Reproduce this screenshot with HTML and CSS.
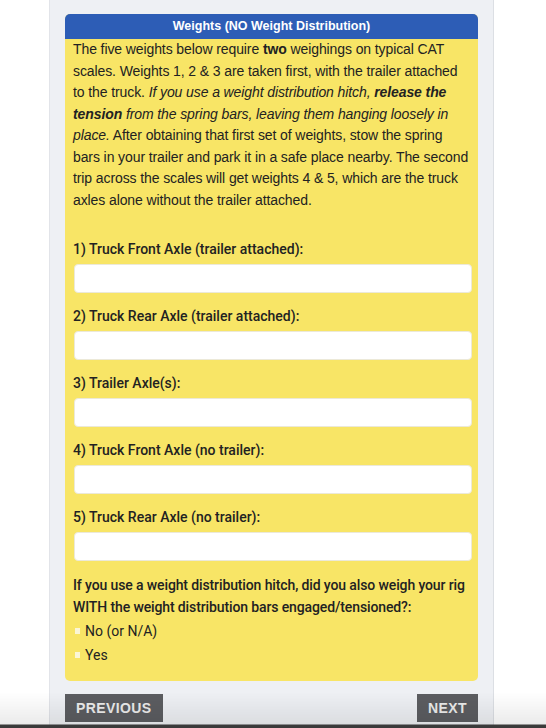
FILE: index.html
```html
<!DOCTYPE html>
<html lang="en">
<head>
<meta charset="utf-8">
<title>Weights</title>
<link rel="stylesheet" href="styles.css">
</head>
<body>
<div class="panel">
  <section class="card">
    <h2 class="card-head">Weights (NO Weight Distribution)</h2>
    <div class="card-body">
      <p class="intro">The five weights below require <b>two</b> weighings on typical CAT scales. Weights 1, 2 &amp; 3 are taken first, with the trailer attached to the truck. <i>If you use a weight distribution hitch, <b>release the tension</b> from the spring bars, leaving them hanging loosely in place.</i> After obtaining that first set of weights, stow the spring bars in your trailer and park it in a safe place nearby. The second trip across the scales will get weights 4 &amp; 5, which are the truck axles alone without the trailer attached.</p>

      <div class="fields">
        <label class="field"><span class="label">1) Truck Front Axle (trailer attached):</span><input class="input" type="text"></label>
        <label class="field"><span class="label">2) Truck Rear Axle (trailer attached):</span><input class="input" type="text"></label>
        <label class="field"><span class="label">3) Trailer Axle(s):</span><input class="input" type="text"></label>
        <label class="field"><span class="label">4) Truck Front Axle (no trailer):</span><input class="input" type="text"></label>
        <label class="field"><span class="label">5) Truck Rear Axle (no trailer):</span><input class="input" type="text"></label>
      </div>

      <p class="question">If you use a weight distribution hitch, did you also weigh your rig WITH the weight distribution bars engaged/tensioned?:</p>
      <div class="options">
        <label class="option"><span class="box"></span>No (or N/A)</label>
        <label class="option"><span class="box"></span>Yes</label>
      </div>
    </div>
  </section>
  <div class="nav">
    <button class="btn" type="button">PREVIOUS</button>
    <button class="btn" type="button">NEXT</button>
  </div>
</div>
<div class="bottom-shade"></div>
</body>
</html>
```
FILE: styles.css
```css
html, body {
  margin: 0;
  padding: 0;
  background: #ffffff;
  font-family: "Liberation Sans", Arial, sans-serif;
  color: #222222;
  overflow: hidden;
  height: 728px;
}

.panel {
  margin-left: 49px;
  width: 445px;
  height: 728px;
  box-sizing: border-box;
  padding: 14px 15px 0 15px;
  background: #eef0f4;
  border-left: 1px solid #e2e4e9;
  border-right: 1px solid #dcdfe4;
}

.card {
  border-radius: 5px;
  overflow: hidden;
  background: #f8e566;
}

.card-head {
  margin: 0;
  height: 25px;
  line-height: 25px;
  background: #2d5db6;
  color: #ffffff;
  text-align: center;
  font-size: 12.5px;
  font-weight: bold;
}

.card-body {
  padding: 0 8px 14px 8px;
}

.intro {
  margin: 0;
  font-size: 14px;
  line-height: 21.5px;
  letter-spacing: -0.1px;
}

.fields {
  display: flex;
  flex-direction: column;
  gap: 13px;
  margin-top: 28px;
}

.field {
  display: flex;
  flex-direction: column;
  gap: 4px;
}

.label, .question {
  font-family: Roboto, "Liberation Sans", sans-serif;
  font-weight: 500;
  font-size: 14px;
  line-height: 21px;
}

.input {
  display: block;
  box-sizing: border-box;
  width: 398px;
  height: 29px;
  margin: 0 0 0 1px;
  border: 1px solid #ece9d8;
  border-radius: 4px;
  background: #ffffff;
}

.question {
  margin: 13px 0 0 0;
  line-height: 22px;
  letter-spacing: -0.12px;
}

.options {
  display: flex;
  flex-direction: column;
  margin-top: 1px;
}

.option {
  display: flex;
  align-items: center;
  gap: 5px;
  height: 24px;
  font-size: 14px;
  font-family: Roboto, "Liberation Sans", sans-serif;
}

.box {
  width: 5px;
  height: 6px;
  margin-left: 2px;
  background: #fbf6d6;
}

.nav {
  display: flex;
  justify-content: space-between;
  margin-top: 13px;
}

.btn {
  height: 28px;
  border: 0;
  background: #5c5d61;
  color: #ececec;
  font-family: "Liberation Sans", Arial, sans-serif;
  font-weight: bold;
  font-size: 14px;
  letter-spacing: 0.4px;
  padding: 0 11px;
}

.bottom-shade {
  position: fixed;
  left: 0;
  right: 0;
  bottom: 0;
  height: 36px;
  background: linear-gradient(to bottom, rgba(0,0,0,0) 0px, rgba(0,0,0,0.08) 32px, #3a3a3a 33px, #3a3a3a 36px);
  pointer-events: none;
}
```
